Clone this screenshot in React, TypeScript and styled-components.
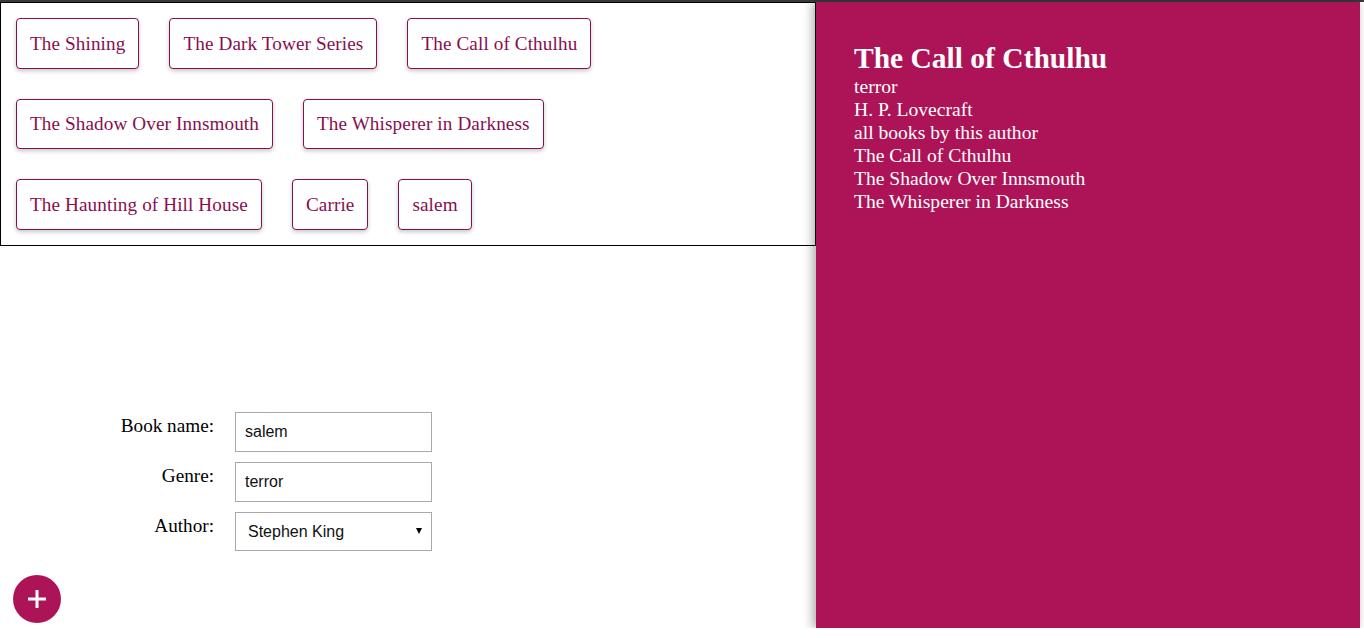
import React from "react";
import styled, { createGlobalStyle } from "styled-components";

const GlobalStyle = createGlobalStyle`
  html, body {
    margin: 0;
    padding: 0;
    background: #ffffff;
    font-family: "Liberation Serif", "Times New Roman", serif;
  }
  * { box-sizing: border-box; }
`;

const TopRule = styled.div`
  height: 2px;
  background: #3a3a3a;
`;

const Page = styled.div`
  display: flex;
  align-items: flex-start;
  width: 1364px;
`;

const LeftColumn = styled.div`
  width: 816px;
  flex: none;
`;

const BookList = styled.div`
  display: flex;
  flex-wrap: wrap;
  align-items: flex-start;
  align-content: flex-start;
  border: 1px solid #000;
`;

const BookButton = styled.button`
  margin: 15px;
  height: 50.6px;
  padding: 0 13px;
  border: 1px solid #880e4f;
  border-radius: 4px;
  background: #ffffff;
  color: #880e4f;
  font-family: "Liberation Serif", "Times New Roman", serif;
  font-size: 19.2px;
  letter-spacing: 0.1px;
  line-height: 23px;
  box-shadow: 0 2px 4px rgba(0, 0, 0, 0.22);
  cursor: pointer;
`;

const Form = styled.form`
  display: grid;
  grid-template-columns: 214px 197px;
  column-gap: 21px;
  row-gap: 10px;
  margin-top: 166px;
`;

const Label = styled.label`
  text-align: right;
  font-size: 19.2px;
  line-height: 23px;
  padding-top: 2px;
  color: #000;
`;

const TextInput = styled.input`
  width: 197px;
  height: 40px;
  border: 1px solid #a9a9a9;
  padding: 0 9px;
  font-family: "Liberation Sans", Arial, sans-serif;
  font-size: 16px;
  color: #111;
  background: #fff;
`;

const SelectWrap = styled.div`
  position: relative;
  width: 197px;
  height: 39px;
  &::after {
    content: "";
    position: absolute;
    right: 10px;
    top: 16px;
    border-left: 3.5px solid transparent;
    border-right: 3.5px solid transparent;
    border-top: 6px solid #000;
    pointer-events: none;
  }
`;

const Select = styled.select`
  appearance: none;
  width: 100%;
  height: 100%;
  border: 1px solid #a9a9a9;
  padding: 0 12px;
  font-family: "Liberation Sans", Arial, sans-serif;
  font-size: 16px;
  color: #111;
  background: #fff;
  border-radius: 0;
`;

const DetailPanel = styled.aside`
  width: 544px;
  height: 626px;
  flex: none;
  background: #ad1457;
  color: #ffffff;
  padding: 39px 38px 0;
  box-shadow: -3px 0 10px rgba(0, 0, 0, 0.35);
  position: relative;
`;

const DetailTitle = styled.h2`
  margin: 0;
  font-size: 29.5px;
  line-height: 34px;
  font-weight: bold;
`;

const DetailLine = styled.div`
  font-size: 19.6px;
  line-height: 23px;
`;

const Fab = styled.button`
  position: fixed;
  left: 13px;
  bottom: 15px;
  width: 48px;
  height: 48px;
  border-radius: 50%;
  border: none;
  background: #ad1457;
  display: flex;
  align-items: center;
  justify-content: center;
  padding: 0;
  cursor: pointer;
`;

const books = [
  "The Shining",
  "The Dark Tower Series",
  "The Call of Cthulhu",
  "The Shadow Over Innsmouth",
  "The Whisperer in Darkness",
  "The Haunting of Hill House",
  "Carrie",
  "salem",
];

const authorBooks = [
  "The Call of Cthulhu",
  "The Shadow Over Innsmouth",
  "The Whisperer in Darkness",
];

export default function App() {
  return (
    <>
      <GlobalStyle />
      <TopRule />
      <Page>
        <LeftColumn>
          <BookList>
            {books.map((b) => (
              <BookButton key={b} type="button">
                {b}
              </BookButton>
            ))}
          </BookList>
          <Form onSubmit={(e) => e.preventDefault()}>
            <Label htmlFor="bookName">Book name:</Label>
            <TextInput id="bookName" defaultValue="salem" />
            <Label htmlFor="genre">Genre:</Label>
            <TextInput id="genre" defaultValue="terror" />
            <Label htmlFor="author">Author:</Label>
            <SelectWrap>
              <Select id="author" defaultValue="Stephen King">
                <option>Stephen King</option>
                <option>H. P. Lovecraft</option>
                <option>Shirley Jackson</option>
              </Select>
            </SelectWrap>
          </Form>
        </LeftColumn>
        <DetailPanel>
          <DetailTitle>The Call of Cthulhu</DetailTitle>
          <DetailLine>terror</DetailLine>
          <DetailLine>H. P. Lovecraft</DetailLine>
          <DetailLine>all books by this author</DetailLine>
          {authorBooks.map((b) => (
            <DetailLine key={b}>{b}</DetailLine>
          ))}
        </DetailPanel>
      </Page>
      <Fab type="button" aria-label="Add book">
        <svg width="20" height="20" viewBox="0 0 20 20">
          <rect x="8.5" y="1" width="3" height="18" fill="#fff" />
          <rect x="1" y="8.5" width="18" height="3" fill="#fff" />
        </svg>
      </Fab>
    </>
  );
}
